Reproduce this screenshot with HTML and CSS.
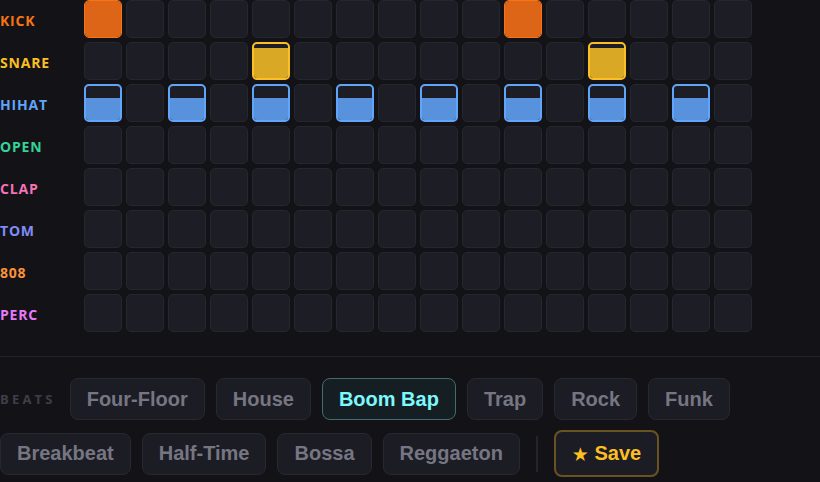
FILE: index.html
```html
<!DOCTYPE html>
<html>
<head>
<meta charset="utf-8">
<title>Step Sequencer</title>
<meta name="viewport" content="width=device-width, initial-scale=1.0">
<link rel="stylesheet" href="styles.css">
</head>
<body>
<div id="grid" class="grid"></div>
<div class="beats">
	<span class="beats-label">BEATS</span>
	<button class="beat">Four-Floor</button>
	<button class="beat">House</button>
	<button class="beat active">Boom Bap</button>
	<button class="beat">Trap</button>
	<button class="beat">Rock</button>
	<button class="beat">Funk</button>
	<button class="beat">Breakbeat</button>
	<button class="beat">Half-Time</button>
	<button class="beat">Bossa</button>
	<button class="beat">Reggaeton</button>
	<span class="sep"></span>
	<button class="save"><span class="star">&#9733;</span>&nbsp;Save</button>
</div>
<script>
// velocity per step, 0 = off
var tracks = [
	{name: 'KICK',  cls: 'kick',  steps: {0: 1, 10: 1}},
	{name: 'SNARE', cls: 'snare', steps: {4: .88, 12: .88}},
	{name: 'HIHAT', cls: 'hihat', steps: {0: .65, 2: .65, 4: .65, 6: .65, 8: .65, 10: .65, 12: .65, 14: .65}},
	{name: 'OPEN',  cls: 'open',  steps: {}},
	{name: 'CLAP',  cls: 'clap',  steps: {}},
	{name: 'TOM',   cls: 'tom',   steps: {}},
	{name: '808',   cls: 'sub',   steps: {}},
	{name: 'PERC',  cls: 'perc',  steps: {}}
];
var grid = document.getElementById('grid');
tracks.forEach(function(t){
	var row = document.createElement('div');
	row.className = 'track ' + t.cls;
	var label = document.createElement('span');
	label.className = 'track-name';
	label.textContent = t.name;
	row.appendChild(label);
	for (var i=0; i<16; i++){
		var step = document.createElement('div');
		step.className = 'step';
		var vel = t.steps[i];
		if (vel){
			step.className += ' on';
			var fill = document.createElement('span');
			fill.className = 'fill';
			fill.style.height = (vel * 100) + '%';
			step.appendChild(fill);
		}
		row.appendChild(step);
	}
	grid.appendChild(row);
});
</script>
</body>
</html>
```
FILE: styles.css
```css
body{
	margin: 0;
	background: #131317;
	font-family: 'Liberation Sans', Arial, sans-serif;
	color: #767682;
}
.grid{
	display: flex;
	flex-direction: column;
	gap: 4px;
	padding-bottom: 24px;
	border-bottom: 1px solid #22222a;
}
.track{
	display: grid;
	grid-template-columns: 80px repeat(16, 38px);
	gap: 4px;
	align-items: center;
	height: 38px;
}
.track-name{
	font-family: 'Open Sans', sans-serif;
	font-weight: 700;
	font-size: 14px;
	letter-spacing: .8px;
	padding-top: 3px;
}
.step{
	height: 38px;
	box-sizing: border-box;
	border: 1.5px solid #26262f;
	border-radius: 5px;
	background: #1d1d25;
	display: flex;
	align-items: flex-end;
	overflow: hidden;
}
.step .fill{
	display: block;
	width: 100%;
}
.kick .track-name{ color: #f97316; }
.snare .track-name{ color: #fbbf24; }
.hihat .track-name{ color: #60a5fa; }
.open .track-name{ color: #34d399; }
.clap .track-name{ color: #f472b6; }
.tom .track-name{ color: #818cf8; }
.sub .track-name{ color: #fb923c; }
.perc .track-name{ color: #e879f9; }
.kick .on{ border-color: #f97316; }
.kick .fill{ background: #dc6517; }
.snare .on{ border-color: #fbbf24; border-width: 2px; }
.snare .fill{ background: #d9a824; }
.hihat .on{ border-color: #60a5fa; border-width: 2px; }
.hihat .fill{ background: #5892dc; }

.beats{
	display: flex;
	flex-wrap: wrap;
	align-items: center;
	gap: 10px 11px;
	padding-top: 21px;
}
.beats-label{
	font-family: 'Open Sans', sans-serif;
	font-weight: 700;
	font-size: 13px;
	letter-spacing: 3.2px;
	color: #3e3e48;
	margin-right: 3px;
}
.beat, .save{
	display: inline-flex;
	align-items: center;
	box-sizing: border-box;
	height: 42px;
	font-family: 'Liberation Sans', Arial, sans-serif;
	font-weight: 700;
	font-size: 20px;
	padding: 0 16px;
	border: 1.5px solid #28282f;
	border-radius: 8px;
	background: #1c1c24;
	color: #767682;
}
.beat.active{
	background: #151f23;
	border-color: #3f6e6d;
	color: #7df8fc;
}
.sep{
	width: 2px;
	height: 36px;
	background: #24242c;
	margin: 0 5px;
}
.save{
	height: 47px;
	border: 2px solid #6a5320;
	color: #fbbf24;
}
.star{
	font-family: 'DejaVu Sans', sans-serif;
	font-size: 19px;
}
```
